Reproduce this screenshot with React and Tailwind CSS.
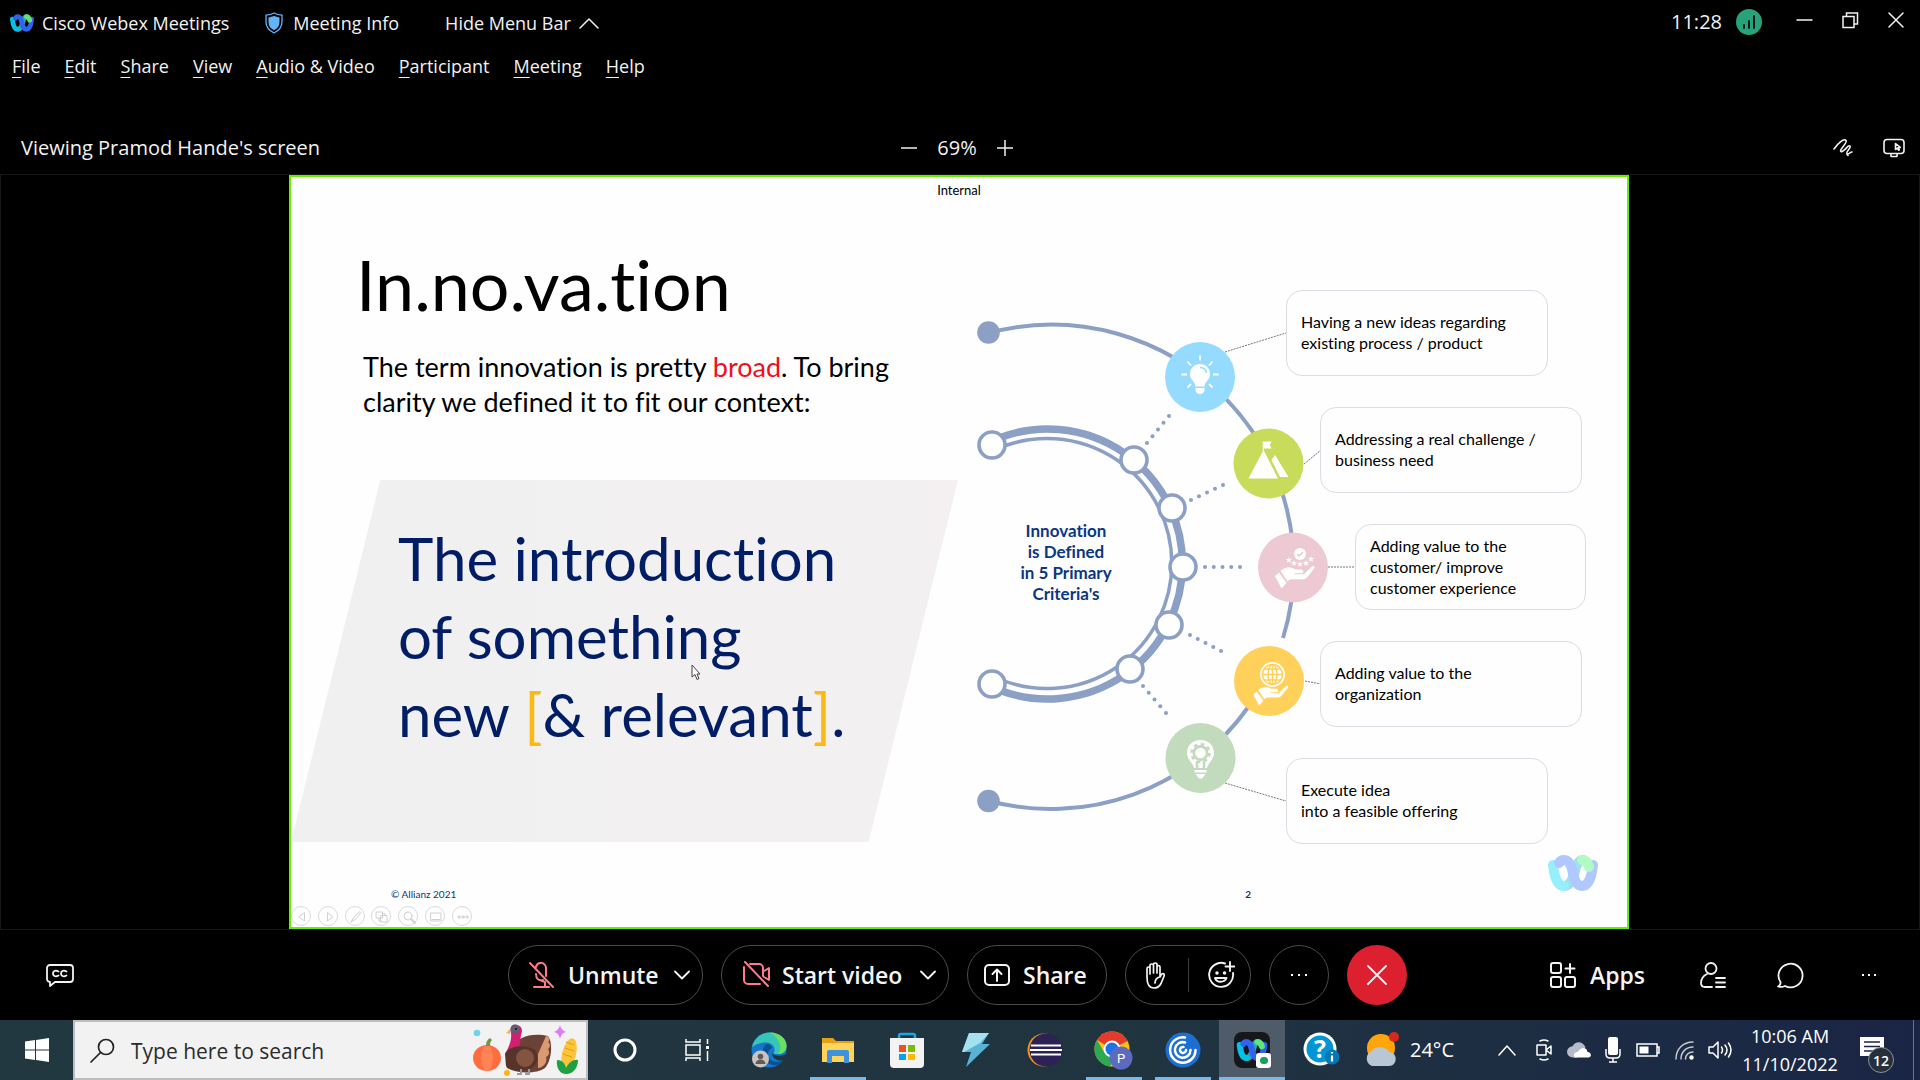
import React from "react";

const UI = "font-['Open_Sans','Noto_Sans',sans-serif]";
const SLIDE = "font-['Lato','Open_Sans',sans-serif] [font-variant-ligatures:none]";

function WebexMark({ className, soft }) {
  const a = soft ? "#96f0fb" : "#07c1e4";
  const b = soft ? "#b0c8ff" : "#2f63f0";
  const c = soft ? "#b0fbc4" : "#5fe37c";
  const d = soft ? "#9fdfee" : "#1fa9b8";
  return (
    <svg viewBox="0 0 50 36" className={className} fill="none" strokeLinecap="round" aria-hidden="true">
      <path d="M16 31c7 0 9-8 11-15 1-6 4-11 8-11" stroke={d} strokeWidth="10" />
      <path d="M5 10c1 10 4 21 11 21" stroke={a} strokeWidth="10" />
      <path d="M11 8c1-2 3-3 5-3 6 0 8 8 9 14 2 7 4 12 9 12 7 0 10-11 11-21" stroke={b} strokeWidth="10" />
      <path d="M34 5c4 0 6 3 7 7" stroke={c} strokeWidth="10" />
    </svg>
  );
}

function Line({ children, size = "size-7", box = "0 0 28 28", w = 2, className = "" }) {
  return (
    <svg viewBox={box} className={`${size} shrink-0 ${className}`} fill="none" stroke="currentColor" strokeWidth={w} strokeLinecap="round" strokeLinejoin="round" aria-hidden="true">
      {children}
    </svg>
  );
}

function TitleBar() {
  return (
    <header className="flex h-[46px] items-center pl-[10px] pr-[15px] text-[18px] leading-6">
      <WebexMark className="h-[18px] w-6" />
      <h1 className="ml-2">Cisco Webex Meetings</h1>
      <button className="ml-9 flex items-center gap-[10px]">
        <svg viewBox="0 0 18 22" className="h-[22px] w-[18px]" aria-hidden="true">
          <path d="M9 1c2.500 1.500 5 2 8 2.200V10c0 5-3 8.500-8 11-5-2.500-8-6-8-11V3.200C4 3 6.500 2.500 9 1z" fill="none" stroke="#64b4fa" strokeWidth="1.300" />
          <path d="M9 3.800c2 1 3.500 1.400 5.500 1.600V10c0 4-2 6.300-5.500 8.300C5.500 16.300 3.500 14 3.500 10V5.400C5.500 5.200 7 4.800 9 3.800z" fill="#64b4fa" />
        </svg>
        Meeting Info
      </button>
      <button className="ml-[46px] flex items-center gap-2">
        Hide Menu Bar
        <Line size="h-3 w-5" box="0 0 20 12" w={1.5}><path d="M1 11l9-9 9 9" /></Line>
      </button>
      <div className="ml-auto flex items-center pb-[2px]">
        <time className="text-[20px]">11:28</time>
        <svg viewBox="0 0 26 26" className="ml-[14px] size-[26px]" aria-hidden="true">
          <circle cx="13" cy="13" r="13" fill="#27a37b" />
          <path d="M8 16v3M13 12v7M18 7v12" stroke="#001a10" strokeWidth="2" strokeLinecap="round" />
        </svg>
        <button aria-label="Minimize" className="ml-[34px] pb-1"><Line size="size-[18px]" box="0 0 18 18" w={1.5}><path d="M1 9h15" /></Line></button>
        <button aria-label="Restore" className="ml-7 pb-1"><Line size="size-[18px]" box="0 0 18 18" w={1.5}><path d="M1 5.500h11v11H1zM4.500 5V2h11v11h-3" strokeLinejoin="miter" /></Line></button>
        <button aria-label="Close" className="ml-[27px] pb-1"><Line size="size-[18px]" box="0 0 18 18" w={1.5}><path d="M2 2l14 14M16 2L2 16" /></Line></button>
      </div>
    </header>
  );
}

const menus = ["File", "Edit", "Share", "View", "Audio & Video", "Participant", "Meeting", "Help"];

function MenuBar() {
  return (
    <nav className="flex h-10 items-center gap-6 pl-3 text-[18px] leading-6">
      {menus.map((m) => (
        <button key={m}>
          <span className="underline underline-offset-4">{m[0]}</span>{m.slice(1)}
        </button>
      ))}
    </nav>
  );
}

function ViewBar() {
  return (
    <div className="mt-auto grid h-[52px] grid-cols-[1fr_auto_1fr] items-center pl-[21px] pr-[27px] text-[20px] leading-7">
      <p>Viewing Pramod Hande's screen</p>
      <div className="flex items-center gap-5">
        <button aria-label="Zoom out"><Line size="size-4" box="0 0 16 16" w={1.5}><path d="M0 8h16" /></Line></button>
        <span>69%</span>
        <button aria-label="Zoom in"><Line size="size-4" box="0 0 16 16" w={1.5}><path d="M0 8h16M8 0v16" /></Line></button>
      </div>
      <div className="-mr-3 flex items-center justify-end gap-[30px]">
        <button aria-label="Annotate">
          <Line size="h-[18px] w-5" box="0 0 20 18" w={1.6}><path d="M1 10C5 4 11-1 13 1.500S5.500 11 8 12.500 15.500 5 17 7s-4.500 6-3 7.500 3-1.500 5-1.500M14 15.500l1 1" /></Line>
        </button>
        <button aria-label="Remote control">
          <Line size="h-5 w-[22px]" box="0 0 22 20" w={1.600}><rect x="1" y="1.500" width="20" height="14" rx="3" /><path d="M8 16v2.500h6V16M12.500 5.500v6l1.800-1.300 1.200 2 .8-.5-1-2 2-.3z" /></Line>
        </button>
      </div>
    </div>
  );
}

const criteria = [
  { lines: ["Having a new ideas regarding", "existing process / product"], place: "ml-0 w-[262px]" },
  { lines: ["Addressing a real challenge /", "business need"], place: "ml-[34px] w-[262px]" },
  { lines: ["Adding value to the", "customer/ improve", "customer experience"], place: "ml-[69px] w-[231px]" },
  { lines: ["Adding value to the", "organization"], place: "ml-[34px] w-[262px]" },
  { lines: ["Execute idea", "into a feasible offering"], place: "ml-0 w-[262px]" },
];

const nodes = [[992, 445], [1134, 460], [1172, 508], [1183, 567], [1169, 625], [1130, 669], [992, 684]];
const dotRuns = [
  [1147, 443, 1169, 416],
  [1191, 500, 1223, 485],
  [1205, 567, 1240, 567],
  [1190, 635, 1221, 651],
  [1143, 686, 1166, 713],
];
const connectors = ["M1225 352L1286 333", "M1304 464L1320 451", "M1328 567H1356", "M1305 681L1321 684", "M1225 783L1286 801"];

function Hand() {
  return (
    <g fill="#fff">
      <path d="M-19 4l4-3.500 7.500 10.500-5 5.500z" />
      <path d="M-13.500-1c4-3.500 8-4.500 12-3l3 1.500h6c2.500.3 2.500 3.500 0 3.800h-7v1h8c2 0 2.500-.8 3.500-2l6-6c1.500-1 3.200.3 2.300 2l-6.300 8c-2 2.500-3 3-6 3H-2c-2 0-3 .7-4.500 2z" />
    </g>
  );
}

function DiagramArt() {
  return (
    <svg viewBox="970 290 616 554" className="absolute inset-0 size-full" fill="none" aria-hidden="true">
      <g stroke="#8c9fc5" strokeWidth="4">
        <path d="M989 333A242 242 0 0 1 1283 638" />
        <path d="M1249 706A242 242 0 0 1 989 801" />
      </g>
      <path d="M999 438A135 135 0 1 1 999 690" stroke="#8c9fc5" strokeWidth="7.500" />
      <path d="M999 448A125 125 0 1 1 999 679" stroke="#8c9fc5" strokeWidth="3.500" />
      <circle cx="988.500" cy="332.500" r="11.300" fill="#8c9fc5" />
      <circle cx="988.500" cy="801" r="11.300" fill="#8c9fc5" />
      {nodes.map(([x, y]) => <circle key={`${x}-${y}`} cx={x} cy={y} r="13" fill="#fff" stroke="#8c9fc5" strokeWidth="3.600" />)}
      {dotRuns.map(([x1, y1, x2, y2]) =>
        [0, 1, 2, 3, 4].map((i) => (
          <circle key={`${x1}-${i}`} cx={x1 + ((x2 - x1) * i) / 4} cy={y1 + ((y2 - y1) * i) / 4} r="2" fill="#8c9fc5" />
        ))
      )}
      {connectors.map((d) => <path key={d} d={d} stroke="#777" strokeWidth="1" strokeDasharray="2 1" />)}

      <circle cx="1200" cy="377" r="35" fill="#94dbff" />
      <g transform="translate(1200 375)">
        <path d="M0-11c6 0 10 4.500 10 10 0 6-5 7-5.500 12.500h-9C-5 6-10 5-10-1c0-5.500 4-10 10-10z" fill="#fff" />
        <path d="M-4.500 13h9v2.500C4 18 2 19 0 19s-4-1-4.500-3.500z" fill="#fff" />
        <path d="M0-7.500c3.500 0 6 2 6.500 5.500" stroke="#94dbff" strokeWidth="1.500" />
        <path d="M0-19.500v5M-12.500-13.500l3.500 4M12.500-13.500l-3.500 4M-18.500-.5h5.500M18.500-.5h-5.500M-12.500 12.500l3.500-3.500M12.500 12.500l-3.500-3.500" stroke="#fff" strokeWidth="1.800" />
      </g>

      <circle cx="1268.500" cy="463.500" r="35" fill="#c9db5b" />
      <g fill="#fff">
        <path d="M1263.500 450l14.500 28.500h-29.500zM1275 455l13.500 22h-8.500l-8.500-17zM1262.700 441.500h9l-2 3.500 2 3.500h-8v4h-1z" />
      </g>

      <circle cx="1293" cy="567.500" r="35" fill="#edc9d3" />
      <g transform="translate(1294 572)"><Hand /></g>
      <circle cx="1300" cy="554" r="6" fill="#fff" />
      <path d="M1297 554l2 2 4-4" stroke="#edc9d3" strokeWidth="1.500" />
      <g fill="#fff">
        {[[1289, 560], [1294, 563], [1300, 564], [1306, 563], [1311, 559]].map(([x, y]) => (
          <path key={x} transform={`translate(${x} ${y})`} d="M0-3l.8 2h2.200L1.300.5l.7 2.200L0 1.400-2 2.700l.7-2.200L-3-1h2.200z" />
        ))}
      </g>

      <circle cx="1269" cy="681" r="35" fill="#ffd05a" />
      <g transform="translate(1270 691) scale(.88)"><Hand /></g>
      <circle cx="1272.500" cy="674.500" r="12.500" fill="#fff" />
      <g stroke="#ffd05a" strokeWidth="1.500">
        <circle cx="1272.500" cy="674.500" r="10" />
        <ellipse cx="1272.500" cy="674.500" rx="4.500" ry="10" />
        <path d="M1262 674.500h21M1264 669h17M1264 680h17M1272.500 664v21" />
      </g>

      <circle cx="1200.500" cy="758" r="35" fill="#c1dbbc" />
      <g transform="translate(1200.500 758)">
        <path d="M0-18c8 0 13.500 5.500 13.500 13C13.500 2 8 4 6.500 10h-13C-8 4-13.500 2-13.500-5-13.500-12.500-8-18 0-18z" fill="#fff" />
        <circle cy="-5" r="8" fill="#c1dbbc" />
        <circle cy="-5" r="9" stroke="#c1dbbc" strokeWidth="2.500" strokeDasharray="3.500 3.570" />
        <circle cy="-5" r="5.300" fill="#fff" />
        <path d="M-3.500 3v7M3.500 3v7" stroke="#c1dbbc" strokeWidth="2.500" />
        <path d="M-6 12H6v2.500H-6zM-5 16H5L1.500 20.500h-3z" fill="#fff" />
      </g>
    </svg>
  );
}

function Diagram() {
  return (
    <section className="relative mt-[87px] flex w-[616px] shrink-0 items-center self-start">
      <DiagramArt />
      <h3 className="relative w-[192px] pb-[10px] text-center text-[17px] font-bold leading-[21px] text-[#0b3782]">
        Innovation<br />is Defined<br />in 5 Primary<br />Criteria's
      </h3>
      <ul className="relative ml-[124px] flex flex-1 flex-col gap-[31px] text-[16px] leading-[21px] text-black">
        {criteria.map((c) => (
          <li key={c.lines.join()} className={`flex h-[86px] flex-col justify-center rounded-2xl border border-[#dcdce4] pb-[2px] pl-[14px] ${c.place}`}>
            {c.lines.map((l) => <span key={l} className="whitespace-nowrap">{l}</span>)}
          </li>
        ))}
      </ul>
    </section>
  );
}

const slideTools = [
  ["Previous", <path key="p" d="M12.500 6v8L7 10z" />],
  ["Next", <path key="p" d="M8.500 6v8l5-4z" />],
  ["Pen", <path key="p" d="M5 15l3-5 6-5.500 1 1L10 12l-5 3z" />],
  ["All slides", <path key="p" d="M4.500 5h6v6h-6zM9 8.500h6v6.500H9zM7 11v3h2M10.500 6.500H13v2" />],
  ["Zoom", <g key="p"><circle cx="9" cy="9" r="4" /><path d="M12 12l4 4" strokeWidth="1.800" /></g>],
  ["Subtitles", <path key="p" d="M5 6h10v8H5zM6 12.500h8" />],
  ["More", <g key="p"><circle cx="6" cy="10" r="1.200" /><circle cx="10" cy="10" r="1.200" /><circle cx="14" cy="10" r="1.200" /></g>],
];

function Slide() {
  return (
    <article className={`relative flex aspect-[1340/754] h-full flex-col overflow-hidden border-2 border-[#66f000] bg-[#fefefe] ${SLIDE}`}>
      <p className="h-[26px] text-center text-[13px] leading-[26px] text-black">Internal</p>
      <div className="flex flex-1">
        <section className="flex w-1/2 shrink-0 flex-col">
          <h1 className="mt-[41px] pl-[65px] text-[70px] leading-[80px] text-black">In.no.va.tion</h1>
          <p className="mt-[25px] pl-[72px] text-[27px] leading-[35px] text-black">
            The term innovation is pretty <span className="text-[#f0101c]">broad</span>. To bring<br />clarity we defined it to fit our context:
          </p>
          <div className="mt-[61px] h-[362px] w-[667px] bg-linear-to-r from-[#f0f0f1] to-[#f4f0f2] pl-[107px] pt-[39px] text-[60px] leading-[78px] text-[#001d66] [clip-path:polygon(13.4%_0,100%_0,86.6%_100%,0_100%)]">
            The introduction<br />of something<br />new <span className="text-[#fdb913]">[</span>&amp; relevant<span className="text-[#fdb913]">]</span>.
          </div>
        </section>
        <div className="w-[11px] shrink-0" />
        <Diagram />
      </div>
      <footer className="text-[#0b3782]">
        <div className="flex h-[22px] items-center justify-between pb-[2px] pl-[100px] pr-[376px] text-[10px]">
          <span>© Allianz 2021</span>
          <b>2</b>
        </div>
        <div className="flex w-[181px] justify-between pb-px">
          {slideTools.map(([name, art]) => (
            <button key={name} aria-label={name} className="grid size-5 place-items-center rounded-full border border-[#dadada] text-[#d0d0d0]">
              <Line size="size-5" box="0 0 20 20" w={1}>{art}</Line>
            </button>
          ))}
        </div>
      </footer>
      <WebexMark soft className="absolute bottom-[36px] right-[29px] h-9 w-[50px]" />
      <svg viewBox="0 0 10 17" className="absolute left-[400px] top-[487px] h-[17px] w-[10px]" aria-hidden="true">
        <path d="M1 1v12l3-2.500 2 5 2-1-2-4.500h3z" fill="#fff" stroke="#444" strokeWidth="1" />
      </svg>
    </article>
  );
}

const pill = "flex h-[60px] items-center rounded-full border border-[#4b4b4b]";

function Controls() {
  const Down = () => <Line size="h-[10px] w-4" box="0 0 16 10" w={1.8}><path d="M1 1.500l7 7 7-7" /></Line>;
  return (
    <div className="grid h-[90px] grid-cols-[1fr_auto_1fr] items-center pr-[51px] pl-[46px] text-[23px] font-semibold text-[#f4f4f4]">
      <button aria-label="Closed captions" className="justify-self-start">
        <Line size="h-6 w-7" box="0 0 28 24" w={1.800}>
          <path d="M4 2h20a3 3 0 0 1 3 3v11a3 3 0 0 1-3 3H9l-5 4v-4a3 3 0 0 1-3-3V5a3 3 0 0 1 3-3z" />
          <path d="M12.500 8.500c-3.500-2-5.500 0-5.500 2s2 4 5.500 2M20.500 8.500c-3.500-2-5.500 0-5.500 2s2 4 5.500 2" />
        </Line>
      </button>
      <div className="flex gap-[18px]">
        <div className={`${pill} w-[195px] pl-[19px]`}>
          <button className="flex items-center gap-3">
            <Line className="text-[#fc7c8c]">
              <path d="M8 6a5 5 0 0 1 9-2 5 5 0 0 1 1 3v8M8 13c0 5 3 7 7 6M13 19.500l4 1.500v5M6 26h15M2 2l23 24" />
            </Line>
            Unmute
          </button>
          <button aria-label="Audio options" className="ml-auto mr-3"><Down /></button>
        </div>
        <div className={`${pill} w-[228px] pl-[20px]`}>
          <button className="flex items-center gap-3">
            <Line className="text-[#fc7c8c]">
              <path d="M8 3h9a4 4 0 0 1 4 4v8M2 6v13a4 4 0 0 0 4 4h12M22 10l5-3v12l-5-3M3 1l23 24" />
            </Line>
            Start video
          </button>
          <button aria-label="Video options" className="ml-auto mr-3"><Down /></button>
        </div>
        <button className={`${pill} w-[140px] gap-3 pl-[15px]`}>
          <Line size="size-7"><rect x="2" y="4" width="24" height="20" rx="4" /><path d="M14 20V9M9.500 13L14 8.500l4.500 4.500" /></Line>
          Share
        </button>
        <div className={`${pill} w-[126px]`}>
          <button aria-label="Raise hand" className="flex flex-1 justify-center pr-1">
            <Line w={1.700}><path d="M6 16V7.500c0-2 3-2 3 0V13 4.500c0-2 3.500-2 3.500 0V12 3.500c0-2 3.500-2 3.500 0V12 6c0-2 3-2 3 0v10l1-2c1.500-2.500 4-1 3 1.200l-3 7.300c-1.500 3-4 4.500-7 4.500-5 0-7-4-7-11zM14 22c0-3 1.500-5 4.500-6" /></Line>
          </button>
          <span className="h-[34px] w-px bg-[#3c3c3c]" />
          <button aria-label="Reactions" className="flex flex-1 justify-center pl-1">
            <Line w={1.900}><path d="M18 2.500A12 12 0 1 0 26 12M23 1v9M18.500 5.500h9M8 17c1.500 5 9.500 5 11.500 0z" /><circle cx="10" cy="12" r=".8" fill="currentColor" /><circle cx="17.500" cy="12" r=".8" fill="currentColor" /></Line>
          </button>
        </div>
        <button aria-label="More options" className="grid size-[60px] place-items-center rounded-full border border-[#4b4b4b]">
          <span className="flex gap-[5px]"><i className="size-[2px] bg-white" /><i className="size-[2px] bg-white" /><i className="size-[2px] bg-white" /></span>
        </button>
        <button aria-label="Leave meeting" className="grid size-[60px] place-items-center rounded-full bg-[#dc2030]">
          <Line size="size-5" box="0 0 20 20" w={1.800}><path d="M1 1l18 18M19 1L1 19" /></Line>
        </button>
      </div>
      <div className="-mr-[7px] flex items-center justify-end">
        <button className="flex items-center gap-[13px]">
          <Line><rect x="2" y="2" width="10" height="10" rx="2" /><rect x="2" y="16" width="10" height="10" rx="2" /><rect x="16" y="16" width="10" height="10" rx="2" /><path d="M21 3v9M16.500 7.500h9" /></Line>
          Apps
        </button>
        <button aria-label="Participants" className="ml-[54px]">
          <Line w={1.800}><circle cx="12" cy="7.500" r="5.500" /><path d="M8 13c-4 2-6 5-6 9 0 3 1 4 4 4h7M17 17h9M17 21.500h9M17 26h9" /></Line>
        </button>
        <button aria-label="Chat" className="ml-[49px]">
          <Line w={1.800}><path d="M4.500 21A12 11.800 0 1 1 9 25c-2 1-4.500 1.200-7 .500 2-1 2.800-2.500 2.500-4.500z" /></Line>
        </button>
        <button aria-label="More panels" className="ml-[58px] flex gap-1">
          <i className="size-[2px] bg-white" /><i className="size-[2px] bg-white" /><i className="size-[2px] bg-white" />
        </button>
      </div>
    </div>
  );
}

function Turkey() {
  return (
    <svg viewBox="0 0 108 52" className="h-[52px] w-[108px]" aria-hidden="true">
      <circle cx="5" cy="9" r="3.300" fill="#6bd5ea" />
      <path d="M88 1q1 5 6 7-5 1-6 7-1-6-6-7 5-2 6-7z" fill="#e07cf5" />
      <ellipse cx="15" cy="34" rx="14" ry="13" fill="#ff6d3f" />
      <ellipse cx="15" cy="34" rx="6" ry="13" fill="#ff8355" />
      <path d="M14 22c0-4 1-6 4-8l2 2c-2 2-2 4-2 6z" fill="#6b9b3a" />
      <path d="M50 14c7-4 18-4 26-2 5 6 4 24-3 32-8 6-28 6-38 0-4-10 3-24 15-30z" fill="#6b4236" />
      <path d="M74 12c4 0 4 5 2 6 3 2 2 6 0 7 2 3 1 7-2 8 2 5-3 11-8 11V30z" fill="#d99a72" />
      <path d="M39 9c-2-6 2-9 6-8 5 1 6 5 4 10-1 6 0 11-4 15-4 5-9 6-12 4 4-7 7-14 6-21z" fill="#d0206f" />
      <circle cx="43" cy="5" r="4.500" fill="#675b72" />
      <circle cx="44" cy="5" r="1" fill="#111" />
      <path d="M38 5l-4 4 4 1z" fill="#ffb33a" />
      <path d="M33 30c4-9 20-10 30-4 5 7 2 16-5 19-8 3-20 2-24-3z" fill="#56342a" />
      <circle cx="53" cy="34" r="9" fill="#83543f" />
      <path d="M49 45v5h-4M57 45v5h-4" stroke="#9a9aa2" strokeWidth="2" fill="none" />
      <ellipse cx="97" cy="30" rx="7" ry="16" transform="rotate(14 97 30)" fill="#fdc43a" />
      <path d="M94 18l8 3M93 24l9 3M91 30l9 3" stroke="#e39c16" strokeWidth="1" />
      <path d="M85 36c6 0 8 4 9 8 3-6 8-9 12-8 0 8-5 14-12 14-6 0-10-6-9-14z" fill="#1fa045" />
      <circle cx="35" cy="49" r="3" fill="#ffb31a" />
    </svg>
  );
}

const apps = [
  ["Cortana", "", <svg key="i" viewBox="0 0 36 36" className="size-9"><circle cx="18" cy="18" r="10" fill="none" stroke="#fff" strokeWidth="3" /></svg>],
  ["Task View", "", <svg key="i" viewBox="0 0 36 36" className="size-9" fill="none" stroke="#fff" strokeWidth="1.500"><path d="M6 7v3h14V7M6 29v-3h14v3M6 13h14v10H6zM27.500 7v5M27.500 19v10" /><rect x="26" y="14" width="3" height="3" fill="#fff" stroke="none" /></svg>],
  ["Edge", "", <svg key="i" viewBox="0 0 36 36" className="size-9">
    <circle cx="18" cy="18" r="17.500" fill="#1377ca" />
    <path d="M1 15C4 4 12 .5 19 .5c10 0 17 7 16.500 14-.5 6-6 9-13 7 3-4 0-10-6-11C10 10 4 13 1 15z" fill="#35c6b8" />
    <path d="M19 .5c10 0 17 7 16.500 14-.4 5-4 8-9 7.500C33 16 28 6 19 .5z" fill="#6bdf61" />
    <path d="M16 12c-6 3-7 18 6 21 4 1 9-2 10-5-7 4-14 1-15-5-.5-4 2-6 4-7-1-3-3-4-5-4z" fill="#0b4f98" />
    <path d="M21 21c2 3 8 4 14 1v6c-8 2-14-1-14-7z" fill="#20363f" />
    <circle cx="9.500" cy="27" r="8.500" fill="#c9c4c0" /><circle cx="9.500" cy="24.500" r="2.800" fill="#5f5b58" /><path d="M4.500 32c0-6 10-6 10 0z" fill="#5f5b58" />
  </svg>],
  ["File Explorer", "w-[56px]", <svg key="i" viewBox="0 0 36 36" className="size-9"><path d="M2 6h11l3 3h18v20H2z" fill="#e5a016" /><path d="M2 11h32v19H2z" fill="#ffd35c" /><path d="M7 31V20q0-2 2-2h18q2 0 2 2v11h-5v-7H12v7z" fill="#3b93dc" /></svg>],
  ["Microsoft Store", "", <svg key="i" viewBox="0 0 36 36" className="size-9"><path d="M10 8V4q0-2 2-2h12q2 0 2 2v4" fill="none" stroke="#1aa7e8" strokeWidth="2.500" /><path d="M1 6h34v26q0 4-4 4H5q-4 0-4-4z" fill="#f3f3f3" /><path d="M10 13h7v7h-7z" fill="#f25022" /><path d="M19 13h7v7h-7z" fill="#7fba00" /><path d="M19 22h7v6h-7z" fill="#ffb900" /><path d="M10 22h7v6h-7z" fill="#00a4ef" /></svg>],
  ["Power tool", "", <svg key="i" viewBox="0 0 36 36" className="size-9"><path d="M11 1h20l-7 11h8L8 35l5-15H4z" fill="#57b4d6" /><path d="M11 1h20l-9 10L6 20H4z" fill="#a6e0ef" /></svg>],
  ["Eclipse", "", <svg key="i" viewBox="0 0 36 36" className="size-9"><circle cx="17" cy="18" r="16.500" fill="#f7941e" /><circle cx="19" cy="18" r="16.500" fill="#2c2255" /><path d="M4 13.500h30M3 18h32M4 22.500h30" stroke="#fff" strokeWidth="2" /></svg>],
  ["Chrome", "w-[56px]", <svg key="i" viewBox="0 0 40 40" className="size-10"><circle cx="18" cy="19" r="17.500" fill="#fbc116" /><path d="M18 19L3 10A17.500 17.500 0 0 1 33.500 11z" fill="#e33b2e" /><path d="M3 10a17.500 17.500 0 0 0 13 26.500L22 25l-12-3z" fill="#2da94f" /><path d="M18 11h15.500L32 9H14z" fill="#e33b2e" /><circle cx="18" cy="19" r="8.500" fill="#fff" /><circle cx="18" cy="19" r="6.500" fill="#1a73e8" /><circle cx="27" cy="28" r="11.500" fill="#5c6bc0" /><text x="27" y="33" textAnchor="middle" fontSize="13" fill="#fff" fontFamily="Roboto, sans-serif">P</text></svg>],
  ["Citrix Workspace", "w-[56px]", <svg key="i" viewBox="0 0 36 36" className="size-9"><circle cx="18" cy="18" r="17.500" fill="#1c6fd1" /><path d="M20 5.500A12.700 12.700 0 1 0 30.500 18M20 10.500A7.800 7.800 0 1 0 25.500 18M18.500 15a3 3 0 1 0 2.500 3" fill="none" stroke="#fff" strokeWidth="2.500" strokeLinecap="round" /></svg>],
  ["Webex", "w-[66px]", <span key="i" className="relative grid size-9 place-items-center rounded-lg bg-[#15171a]"><WebexMark className="h-[22px] w-8" /><span className="absolute -right-px bottom-0 grid size-[15px] place-items-center rounded-[3px] bg-white"><span className="h-[7px] w-2 rounded-sm bg-[#19a05c]" /></span></span>],
  ["Help", "", <svg key="i" viewBox="0 0 36 36" className="size-9"><circle cx="17" cy="17" r="16.500" fill="#fff" /><circle cx="17" cy="17" r="13.500" fill="#0096d6" /><text x="17" y="26" textAnchor="middle" fontSize="25" fontWeight="700" fill="#fff" fontFamily="Open Sans, sans-serif">?</text><circle cx="29" cy="25" r="7.500" fill="#0079b5" /><path d="M29 23.500v6M29 20v1.500" stroke="#fff" strokeWidth="2.200" /></svg>],
];

function Taskbar() {
  return (
    <footer className="flex h-[60px] items-stretch bg-linear-to-r from-[#213840] via-[#203440] via-60% to-[#1a2545] text-white">
      <button aria-label="Start" className="grid w-[73px] shrink-0 place-items-center">
        <svg viewBox="0 0 24 24" className="size-6" fill="#fff" aria-hidden="true"><path d="M0 3.500l10-1.400v9.400H0zM11 2l13-2v11.500H11zM0 12.500h10v9.400L0 20.500zM11 12.500h13V24l-13-2z" /></svg>
      </button>
      <label className="flex w-[515px] shrink-0 items-center border-2 border-[#bdbdbd] bg-[#f2f2f2] pl-[15px] text-[#222]">
        <Line size="size-[25px]" box="0 0 25 25" w={1.700}><circle cx="16" cy="9" r="7.500" /><path d="M10.500 14.500L1 24" /></Line>
        <input type="text" aria-label="Search" placeholder="Type here to search" className="ml-4 min-w-0 flex-1 bg-transparent pt-1 text-[21px] placeholder:text-[#2b2b2b]" />
        <span className="mr-[6px]"><Turkey /></span>
      </label>
      <div className="flex w-[768px] shrink-0">
        {apps.map(([name, bar, icon], i) => (
          <button key={name} aria-label={name} className={`relative flex items-center justify-center ${i < 2 ? "w-[73px]" : "flex-1"}`}>
            {name === "Webex" && <span className="absolute inset-y-0 w-[66px] bg-[#4d5c68]" />}
            <span className="relative">{icon}</span>
            {bar && <span className={`absolute bottom-0 h-[3px] bg-[#76b9ed] ${bar}`} />}
          </button>
        ))}
      </div>
      <button className="ml-[7px] flex items-center gap-[9px] text-[20px]">
        <svg viewBox="0 0 38 36" className="h-9 w-[38px]" aria-hidden="true"><circle cx="18" cy="16" r="14" fill="#ffa60d" /><path d="M9 34a8 8 0 0 1 0-15c2-5 14-5 17 1 9 0 9 14 0 14z" fill="#b9c6d3" /><circle cx="31" cy="5" r="5" fill="#d6281e" /></svg>
        24°C
      </button>
      <div className="ml-auto flex items-center gap-[14px]">
        <Line size="h-3 w-[18px]" box="0 0 18 12" w={1.500}><path d="M1 11l8-9 8 9" /></Line>
        <Line size="h-6 w-5" className="ml-1" box="0 0 20 24" w={1.500}><path d="M6 3q4-2 8 0M6 21q4 2 8 0M3 7h9v10H3zM12 12l5-4v8z" /></Line>
        <svg viewBox="0 0 26 18" className="-ml-px h-[18px] w-6" aria-hidden="true"><path d="M6 17a6 6 0 0 1 0-12c3-6 11-6 14 1l-9 11z" fill="#b5bcc6" /><path d="M8 17q-2-5 4-6c3-6 10-5 10 0 5 1 5 6 1 6z" fill="#fff" /></svg>
        <svg viewBox="0 0 16 26" className="h-[26px] w-4" aria-hidden="true"><rect x="3" y="0" width="10" height="18" rx="2" fill="#fff" /><path d="M1 12v5q0 4 4 4h6q4 0 4-4v-5M8 21v4M4 25h8" fill="none" stroke="#fff" strokeWidth="1.500" /></svg>
        <svg viewBox="0 0 24 16" className="ml-px h-4 w-6" aria-hidden="true"><path d="M1 2h20v12H1zM21 5h2v6h-2" fill="none" stroke="#fff" strokeWidth="1.500" /><path d="M3.500 4.500h9v7h-9z" fill="#fff" /></svg>
        <Line size="size-5" box="0 0 20 20" w={1.500}><path d="M2 19C2 9 9 2 19 2M7 19C7 12 12 7 19 7M11.500 19c0-4 3-7 7.500-7" opacity=".75" /><circle cx="17.500" cy="17.500" r="1.500" fill="currentColor" /></Line>
        <Line size="h-5 w-6" box="0 0 24 20" w={1.500}><path d="M1 7h4l5-5v16l-5-5H1zM13.500 7q2 3 0 6M17 5q4 5 0 10M20.500 3q5 7 0 14" /></Line>
        <time className="-ml-1 w-[96px] text-center text-[18px] leading-[28px]">10:06 AM<br />11/10/2022</time>
      </div>
      <button aria-label="12 notifications" className="relative ml-[19px] w-[44px] shrink-0">
        <svg viewBox="0 0 24 24" className="mb-1 ml-[3px] size-6" aria-hidden="true"><path d="M0 1h24v19h-9l-5 4v-4H0z" fill="#fff" /><path d="M4 6h16M4 10.500h16M4 15h10" stroke="#1b2745" strokeWidth="1.500" /></svg>
        <span className="absolute bottom-[7px] left-[11px] grid size-[26px] place-items-center rounded-full border border-[#8b939c] bg-[#26303a] text-[14px] font-semibold">12</span>
      </button>
      <span className="ml-3 mr-[6px] w-px bg-[#6b7480]" />
    </footer>
  );
}

export default function App() {
  return (
    <div className={`flex h-screen flex-col overflow-hidden bg-black text-[#f2f2f2] ${UI}`}>
      <div className="flex h-[174px] shrink-0 flex-col">
        <TitleBar />
        <MenuBar />
        <ViewBar />
      </div>
      <main className="flex min-h-0 flex-1 justify-center border border-[#161616] pr-[2px]">
        <Slide />
      </main>
      <Controls />
      <Taskbar />
    </div>
  );
}
